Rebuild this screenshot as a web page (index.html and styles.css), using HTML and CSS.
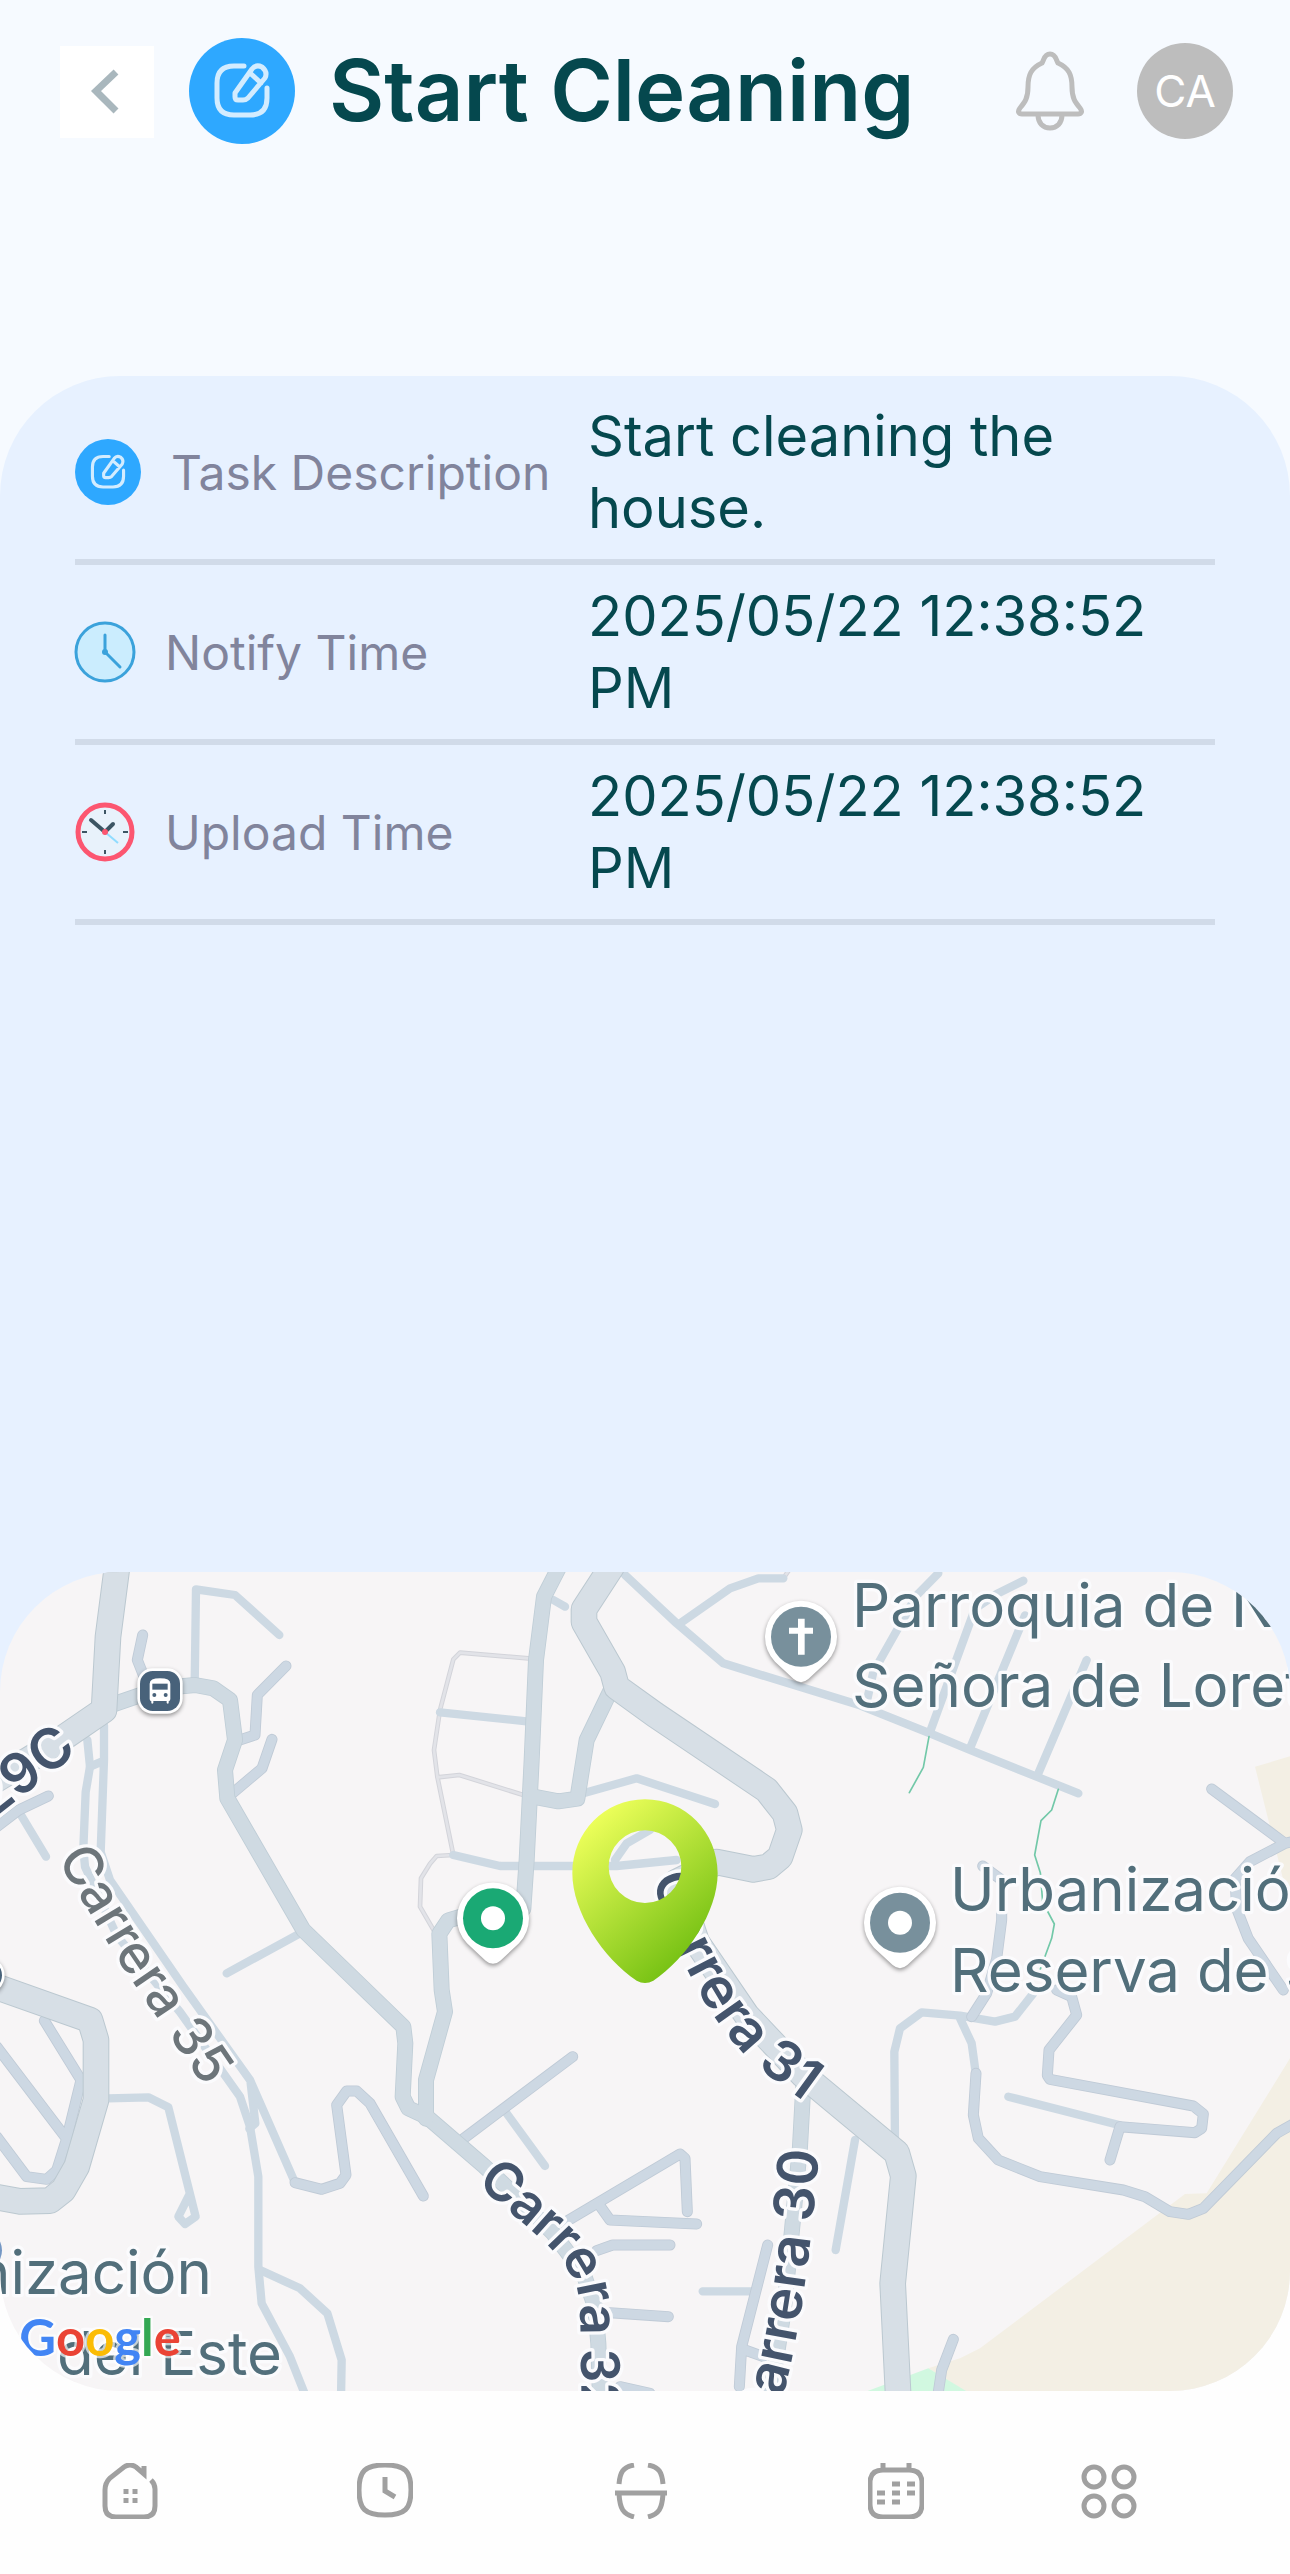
FILE: index.html
```html
<!doctype html>
<html lang="en">
<head>
<meta charset="utf-8">
<meta name="viewport" content="width=device-width, initial-scale=1">
<title>Start Cleaning</title>
<link rel="stylesheet" href="styles.css">
</head>
<body>

	<svg class="defs" aria-hidden="true">
		<symbol id="iconEdit" viewBox="0 0 106 106">
			<circle cx="53" cy="53" r="53" fill="#2ea8ff" />
			<g fill="none" stroke="#d3ecff" stroke-width="5" stroke-linecap="round" stroke-linejoin="round">
				<path d="M55 28 H45 Q28 28 28 45 V60 Q28 77 45 77 H61 Q78 77 78 60 V50" />
				<path d="M46 55 L63 31 Q67 26 73 29 Q79 34 76 40 L59 60 Q57 62 54 62 H49 Q46 62 46 59 Z M61 35 L72 45" />
			</g>
		</symbol>
	</svg>

	<div class="top">

		<header class="header">
			<button class="back" aria-label="Back">
				<svg viewBox="0 0 94 92"><path d="M56 26 L36 45 L56 65" fill="none" stroke="#a9b7bd" stroke-width="7" /></svg>
			</button>
			<svg class="title-icon" aria-hidden="true"><use href="#iconEdit" /></svg>
			<h1>Start Cleaning</h1>
			<button class="bell" aria-label="Notifications">
				<svg viewBox="0 0 68 80" fill="none" stroke="#bdbdbd" stroke-width="5">
					<path d="M34 3 C28 3 28 9 26 12 C15 17 12 24 12 36 C12 47 9 51 4 57 C1 61 3 63 6 63 H62 C65 63 67 61 64 57 C59 51 56 47 56 36 C56 24 53 17 42 12 C40 9 40 3 34 3 Z" />
					<path d="M22 64 C22 72 27 77 34 77 C41 77 46 72 46 64" />
				</svg>
			</button>
			<a class="avatar" href="#profile">CA</a>
		</header>

		<main class="details">
			<dl>
				<div class="row">
					<dt>
						<svg class="icon-task" aria-hidden="true"><use href="#iconEdit" /></svg>
						Task Description
					</dt>
					<dd>Start cleaning the house.</dd>
				</div>
				<div class="row">
					<dt>
						<svg class="icon-clock" viewBox="0 0 60 60" aria-hidden="true">
							<circle cx="30" cy="30" r="29" fill="#cbedfe" stroke="#3ba2db" stroke-width="3" />
							<path d="M30 13 V30 L45 45" fill="none" stroke="#3ba2db" stroke-width="3" stroke-linecap="round" />
							<circle cx="30" cy="30" r="3" fill="#3ba2db" />
						</svg>
						Notify Time
					</dt>
					<dd>2025/05/22 12:38:52 PM</dd>
				</div>
				<div class="row">
					<dt>
						<svg class="icon-clock" viewBox="0 0 60 60" aria-hidden="true">
							<circle cx="30" cy="30" r="27" fill="#e8f2fb" stroke="#fc5670" stroke-width="5" />
							<path d="M30 8 V12 M30 48 V52 M7 30 H12 M48 30 H53" stroke="#3c5563" stroke-width="2" />
							<path d="M30 30 L43 41" stroke="#8fdcff" stroke-width="2" />
							<path d="M16 18 L30 30 L38 22" fill="none" stroke="#3c5563" stroke-width="4" stroke-linecap="round" />
							<circle cx="30" cy="30" r="3" fill="#fc5670" />
						</svg>
						Upload Time
					</dt>
					<dd>2025/05/22 12:38:52 PM</dd>
				</div>
			</dl>
		</main>

	</div>

	<section class="map" aria-label="Map">
		<svg viewBox="0 0 3870 2457" preserveAspectRatio="xMidYMid slice">
			<defs>
				<linearGradient id="pinFill" x1="0.15" y1="0.1" x2="0.75" y2="0.95">
					<stop offset="0" stop-color="#edff5a" />
					<stop offset="1" stop-color="#70be10" />
				</linearGradient>

				<!-- each road set is drawn twice, edge first and fill over it -->
				<g id="roadsMajor">
					<path d="M350 -6 L324 194 L312 414 L160 518 L-40 640" />
					<path d="M1835 -16 L1752 112 V150 L1838 300 L1850 345 L1965 428 L2300 654 L2355 724 L2368 774 L2340 855 L2305 884 L2260 892 L2150 870 L2030 930 L2090 1110 L2240 1330 L2410 1510 L2690 1742 L2710 1812 L2678 2134 L2695 2480" />
					<path d="M-40 1234 L270 1344 L288 1404 V1584 L230 1784 L190 1854 L150 1886 L60 1888 L-20 1874" />
				</g>
				<g id="roadsMid">
					<path d="M320 404 L480 349 L585 339 L640 349 L690 384 L705 504 L675 594 L682 679 L910 1074 L1210 1364 L1216 1414 L1208 1574 L1225 1609 L1280 1634 L1450 1780 L1540 1864 L1660 1984 L1750 2104 L1785 2204 L1795 2314 L1800 2480" />
					<path d="M1675 -10 L1632 74 L1608 264 L1595 564 L1580 864 L1570 1010 L1520 1035 H1380 L1345 1045 L1318 1085 L1325 1254 L1335 1319 L1278 1524 V1640" />
					<path d="M1835 349 L1760 504 L1732 680 L1675 688 L1600 674" />
					<path d="M2410 1540 L2400 1724 L2375 1984 L2350 2224 L2310 2480" />
				</g>
				<g id="roadsMinor">
					<path d="M428 189 L412 264 L440 334 M858 282 L772 369 L765 489 L710 507 M816 502 L786 589 L690 670 M145 672 L55 715 L-10 765" />
					<path d="M133 1346 L243 1524 L200 1700 L170 1795 L140 1822 L80 1814 L-10 1694 M-10 1424 L195 1694" />
					<path d="M885 1832 L965 1852 L1020 1834 L1038 1809 L1010 1599 L1040 1557 H1070 L1110 1594 L1270 1872" />
					<path d="M3635 651 L3855 814 L3750 869 L3705 920 L3710 1010 L3745 1100 L3850 1254 M3855 814 L3890 806" />
					<path d="M2948 882 L3005 924 V1044 L2990 1160 L2960 1264 L2915 1334" />
					<path d="M2928 1504 L2920 1629 L2935 1699 L2995 1764 L3120 1814 L3370 1854 L3435 1874 L3510 1919 L3565 1927 L3610 1909 L3830 1684 L3890 1650" />
					<path d="M3170 1254 L3215 1274 L3230 1329 L3147 1434 L3142 1510 L3150 1522 L3580 1602 L3610 1626 L3605 1669 L3585 1682 L3360 1664 L3330 1764" />
					<path d="M2860 2302 L2825 2394 L2812 2480" />
					<path d="M1718 1454 L1385 1704 M2062 1919 L2055 1759 L2040 1746 L1690 1954 M1798 1899 L1830 1944 L2090 1956 M1790 2036 L1838 2019 H2010 M1830 2222 L2005 2234 M1860 2444 L1950 2464" />
					<path d="M2303 2019 L2225 2324 L2218 2444 M2235 2334 L2290 2354" />
				</g>
				<g id="paths">
					<path d="M1585 259 L1380 242 L1360 262 L1320 414 L1302 534 L1312 614 L1360 849 L1310 852 L1290 875 L1263 919 L1260 1004 L1310 1090 M1312 616 L1378 609 L1570 669 M2350 19 L2370 -10" />
				</g>

				<g id="markerShape">
					<path d="M-78 75 A108 108 0 1 1 78 75 L22 127 Q0 146 -22 127 Z" fill="#fff" />
				</g>
			</defs>

			<rect width="3870" height="2457" fill="#f7f5f6" />
			<path d="M3765 584 L3880 550 V980 L3850 924 Z M3870 1459 L3620 1864 L3555 1866 L2940 2329 L2880 2359 L2785 2389 L2900 2460 H3870 Z" fill="#f3efe4" />
			<path d="M2600 2458 L2785 2389 L2900 2458 Z" fill="#d1f8e0" />

			<use href="#paths" class="path-edge" />
			<use href="#paths" class="path" />
			<g class="lane">
				<path d="M584 339 L588 52 L705 69 L838 189 M60 724 L138 854 M900 1084 L680 1204" />
				<path d="M262 504 L270 584 L257 660 L250 830 L255 884 L350 1090 L540 1320 L720 1574 L750 1664 L775 1814 V2084 L785 2194 L870 2354 L920 2480" />
				<path d="M312 460 V564 L302 840 L330 924 L550 1244 L750 1524 L885 1832 M270 584 L312 566 M752 1534 L766 1654 L748 1670" />
				<path d="M780 2094 L900 2149 L982 2224 L1025 2364 L1023 2480" />
				<path d="M325 1579 L445 1576 L505 1606 L587 1934 L555 1956 L535 1934 L568 1868" />
				<path d="M1660 84 L1695 104 M1875 9 L2030 154 L2170 274 L2580 400 L2790 484 L2910 534 L3235 664 M2040 154 L2190 49 L2275 19 H2350" />
				<path d="M1320 421 L1580 448 M1750 664 L1910 619 L2145 696 M1360 849 L1500 882 H1850 L2030 864 M1845 864 L1880 814 L1950 774" />
				<path d="M2815 4 L2750 70 L2620 300 L2600 390 M3070 26 L2990 66 L2925 110 L2790 480 M3075 130 L2910 529 M3260 264 L3115 604" />
				<path d="M2685 1714 L2683 1439 L2700 1369 L2765 1321 L2880 1331 L2985 1349 L3045 1334 L3100 1264 M2880 1339 L2915 1414 L2928 1509 M3025 1574 L3360 1660" />
				<path d="M1520 1624 L1635 1782 M2565 1704 L2507 2034 M2108 2158 H2260" />
			</g>
			<use href="#roadsMinor" class="minor-edge" />
			<use href="#roadsMinor" class="minor" />
			<use href="#roadsMid" class="mid-edge" />
			<use href="#roadsMid" class="mid" />
			<use href="#roadsMajor" class="major-edge" />
			<use href="#roadsMajor" class="major" />
			<path class="trail" d="M2787 494 L2770 586 L2728 662 M3175 652 L3155 714 L3123 746 L3104 849 L3121 902 L3128 990 L3163 1056 L3155 1099 L3120 1194" />

			<!-- street names -->
			<path id="street31" d="M1958 915 C1980 1000 2010 1090 2045 1160 S2130 1330 2209 1420 S2360 1545 2520 1670" fill="none" />
			<path id="street35" d="M170 860 L362 1176 L640 1585" fill="none" />
			<path id="street32" d="M1428 1834 C1560 1950 1660 2020 1705 2094 S1738 2210 1743 2360 L1748 2700" fill="none" />
			<path id="street30" d="M2250 2780 L2357 2440 Q2420 2200 2457 1735" fill="none" />
			<g class="street">
				<text><textPath href="#street31">Carrera 31</textPath></text>
				<text class="street-light"><textPath href="#street35">Carrera 35</textPath></text>
				<text class="street-bend"><textPath href="#street32">Carrera 32</textPath></text>
				<text text-anchor="end"><textPath href="#street30" startOffset="100%">Carrera 30</textPath></text>
				<text text-anchor="end" transform="translate(236 540) rotate(-38)">29C</text>
			</g>

			<!-- places -->
			<g class="place">
				<text x="2556" y="164">Parroquia de N</text>
				<text x="2556" y="404">Señora de Loreto</text>
				<text x="2850" y="1018">Urbanización</text>
				<text x="2850" y="1260">Reserva de San</text>
				<text x="636" y="2167" text-anchor="end">Urbanización</text>
				<text x="846" y="2409" text-anchor="end">del Este</text>
			</g>

			<g class="marker">
				<g transform="translate(480 357)">
					<rect x="-68" y="-68" width="136" height="136" rx="46" fill="#fff" />
					<rect x="-60" y="-60" width="120" height="120" rx="38" fill="#48627a" />
					<path d="M-31 24 V-22 Q-31 -38 0 -38 Q31 -38 31 -22 V24 Q31 30 26 31 V36 Q24 40 20 36 V30 H-20 V36 Q-24 40 -26 36 V31 Q-31 30 -31 24 Z" fill="#fff" />
					<path d="M-23 -22 H23 V-4 H-23 Z" fill="#48627a" />
					<circle cx="-17" cy="12" r="6" fill="#48627a" />
					<circle cx="17" cy="12" r="6" fill="#48627a" />
				</g>
				<g transform="translate(2403 194)">
					<use href="#markerShape" />
					<circle r="90" fill="#78909c" />
					<path d="M-9 -54 H11 V-27 H36 V-9 H11 V54 H-9 V-9 H-36 V-27 H-9 Z" fill="#fff" />
				</g>
				<g transform="translate(1479 1039)">
					<use href="#markerShape" />
					<circle r="90" fill="#1aa974" />
					<circle r="36" fill="#fff" />
				</g>
				<g transform="translate(2700 1052)">
					<use href="#markerShape" />
					<circle r="90" fill="#78909c" />
					<circle r="36" fill="#fff" />
				</g>
				<circle cx="-42" cy="1210" r="52" fill="#48627a" stroke="#fff" stroke-width="8" />
			</g>
			<circle cx="-56" cy="2035" r="62" fill="#7497c4" />

			<path fill="url(#pinFill)" fill-rule="evenodd" d="M1935 682 C2056 682 2153 780 2153 904 C2153 1020 2060 1160 1960 1226 Q1935 1240 1910 1226 C1810 1160 1717 1020 1717 904 C1717 780 1814 682 1935 682 Z M1935 775 A109 109 0 1 0 1935 993 A109 109 0 1 0 1935 775 Z" />

			<text class="google" x="58" y="2352"><tspan fill="#4285f4">G</tspan><tspan fill="#ea4335">o</tspan><tspan fill="#fbbc05">o</tspan><tspan fill="#4285f4">g</tspan><tspan fill="#34a853">l</tspan><tspan fill="#ea4335">e</tspan></text>
		</svg>
	</section>

	<nav class="nav">
		<a href="#home" aria-label="Home">
			<svg viewBox="0 0 56 56">
				<path d="M49 17 Q53 21 53 26 V43 Q53 54 42 54 H14 Q3 54 3 43 V27 Q3 20 8 15 L22 4 Q28 0 34 4 L42 11 V3" />
				<path d="M24 26 V31 M33 26 V31 M24 35 V40 M33 35 V40" />
			</svg>
		</a>
		<a href="#history" aria-label="History">
			<svg viewBox="0 0 56 56">
				<path d="M28 2 C48 2 54 8 54 27 C54 46 48 52 28 52 C8 52 2 46 2 27 C2 8 8 2 28 2 Z" />
				<path d="M28 14 V28 L38 34" />
			</svg>
		</a>
		<a href="#scan" aria-label="Scan">
			<svg viewBox="0 0 56 56">
				<path d="M6 21 C7 9 10 4 21 2 M50 21 C49 9 46 4 35 2 M2 30 H54 M6 31 C7 46 10 51 21 54 M50 31 C49 46 46 51 35 54" />
			</svg>
		</a>
		<a href="#calendar" aria-label="Calendar">
			<svg viewBox="0 0 56 56">
				<path d="M15 7 H41 Q54 7 54 20 V41 Q54 54 41 54 H15 Q2 54 2 41 V20 Q2 7 15 7 Z M15 0 V7 M41 0 V7" />
				<path d="M24 21 H32 M39 21 H47 M9 30 H17 M24 30 H32 M39 30 H47 M9 39 H17 M24 39 H32" />
			</svg>
		</a>
		<a href="#more" aria-label="More">
			<svg viewBox="0 0 56 56">
				<circle cx="13" cy="14" r="10" />
				<circle cx="43" cy="14" r="10" />
				<circle cx="13" cy="43" r="10" />
				<circle cx="43" cy="43" r="10" />
			</svg>
		</a>
	</nav>

</body>
</html>
```

FILE: styles.css
```css
	* { box-sizing: border-box; }
	body { background: #fefefe; color: #05484e; font-family: Inter, "Liberation Sans", sans-serif; margin: 0; }
	a { text-decoration: none; }
	button { background: none; border: none; cursor: pointer; padding: 0; }
	svg { display: block; flex: none; }

	.defs { height: 0; position: absolute; width: 0; }

	.top { background: #f6faff; }

	.header { align-items: flex-start; display: flex; height: 376px; padding: 38px 57px 0 60px; }
	.header > * { flex: none; }
	.back { background: #fff; height: 92px; margin: 8px 35px 0 0; width: 94px; }
	.back svg { height: 92px; width: 94px; }
	.title-icon { height: 106px; width: 106px; }
	h1 { font-size: 85px; font-weight: 600; line-height: 106px; margin: 0 auto 0 34px; white-space: nowrap; }
	.bell { margin: 13px 53px 0 0; }
	.bell svg { height: 80px; width: 68px; }
	.avatar { background: #bdbdbd; border-radius: 50%; color: #fff; font-size: 44px; height: 96px; line-height: 96px; margin-top: 5px; text-align: center; width: 96px; }

	.details { background: #e7f1ff; border-radius: 120px 120px 0 0; padding: 9px 75px 847px; }
	dl { margin: 0; }
	.row { align-items: center; border-bottom: 6px solid #d1dbe9; display: flex; padding: 15px 0; }
	dt { align-items: center; color: #81849c; display: flex; font-size: 48px; gap: 30px; white-space: nowrap; width: 45%; }
	dd { font-size: 56px; line-height: 72px; margin: 0; width: 55%; }
	.icon-task { height: 66px; width: 66px; }
	.icon-clock { height: 60px; overflow: visible; width: 60px; }

	/* the map card overlaps the end of the details panel */
	.map { border-radius: 120px; height: 819px; margin-top: -200px; overflow: hidden; position: relative; }
	.map svg { height: 100%; width: 100%; }

	.path-edge, .path, .lane, .minor-edge, .minor, .mid-edge, .mid, .major-edge, .major, .trail { fill: none; stroke-linecap: round; stroke-linejoin: round; }
	.path-edge { stroke: #d3d4da; stroke-width: 14px; }
	.path { stroke: #e2e3e8; stroke-width: 8px; }
	.lane { stroke: #cdd9e3; stroke-width: 25px; }
	.minor-edge { stroke: #bfcad6; stroke-width: 33px; }
	.minor { stroke: #cdd8e3; stroke-width: 28px; }
	.mid-edge { stroke: #bfcdd6; stroke-width: 48px; }
	.mid { stroke: #cfdae2; stroke-width: 43px; }
	.major-edge { stroke: #bbc8d0; stroke-width: 80px; }
	.major { stroke: #d7dfe6; stroke-width: 74px; }
	.trail { stroke: #72c8a8; stroke-width: 5px; }

	.street, .place { paint-order: stroke; stroke: #fbfbfd; stroke-linejoin: round; stroke-width: 20px; }
	.street { fill: #44546c; font-size: 168px; font-weight: 600; }
	.street-light { fill: #6d757a; font-size: 160px; font-weight: 500; }
	.street-bend { font-size: 160px; }
	.place { fill: #526f7b; font-size: 180px; }
	.marker > * { filter: drop-shadow(0 6px 6px #0006); }
	.google { font-family: Lato, sans-serif; font-size: 152px; font-weight: 700; paint-order: stroke; stroke: #fffa; stroke-width: 14px; }

	.nav { display: grid; grid-template-columns: 3fr 3fr 3fr 3fr 2fr; justify-items: center; padding: 72px 96px 56px 2px; }
	.nav svg { fill: none; height: 56px; stroke: #a0a0a0; stroke-width: 5px; width: 56px; }
```
